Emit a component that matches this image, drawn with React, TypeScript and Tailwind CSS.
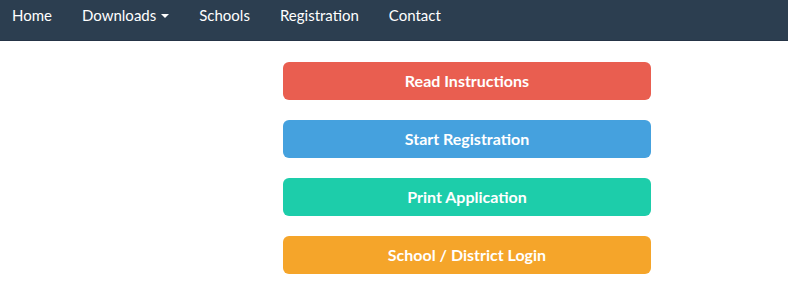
const navLinks = ['Home', 'Downloads', 'Schools', 'Registration', 'Contact']

const actions = [
  { label: 'Read Instructions', color: 'bg-[#e95e50]' },
  { label: 'Start Registration', color: 'bg-[#45a1de]' },
  { label: 'Print Application', color: 'bg-[#1dcdaa]' },
  { label: 'School / District Login', color: 'bg-[#f5a52a]' },
]

export default function App() {
  return (
    <div className="min-h-[291px] bg-white font-['Lato',sans-serif]">
      {/* Navbar */}
      <nav className="h-[41px] bg-[#2c3e50] border-b border-[#253446] flex items-start">
        <ul className="flex -ml-[3px]">
          {navLinks.map((link) => (
            <li key={link}>
              <a className="flex items-center px-[15px] pt-[5px] text-[15px] leading-[20px] text-white">
                {link}
                {link === 'Downloads' && (
                  <span className="ml-[5px] mt-[1px] inline-block w-0 h-0 border-x-[4px] border-x-transparent border-t-[4px] border-t-white" />
                )}
              </a>
            </li>
          ))}
        </ul>
      </nav>

      {/* Actions */}
      <div className="flex flex-col gap-[20px] pt-[21px] pl-[283px] w-[651px]">
        {actions.map((a) => (
          <button
            key={a.label}
            className={`${a.color} h-[38px] w-[368px] rounded-[6px] text-white font-bold text-[16px]`}
          >
            {a.label}
          </button>
        ))}
      </div>
    </div>
  )
}
